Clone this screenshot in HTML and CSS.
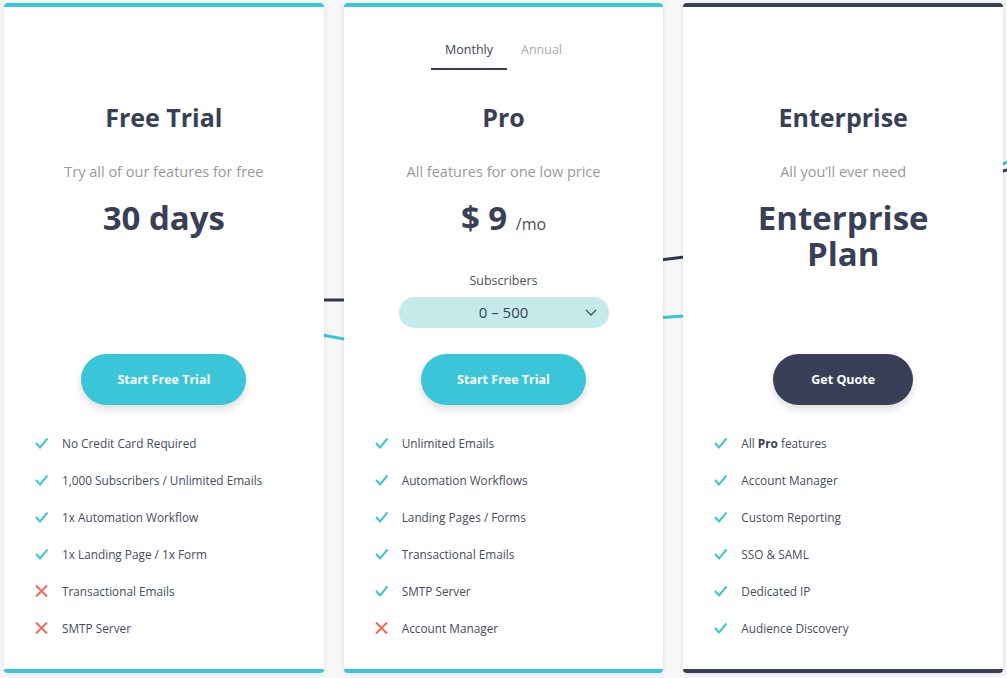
FILE: index.html
```html
<!DOCTYPE html>
<html>
    <head>
        <meta name="viewport" content="width=device-width, initial-scale=1.0">
        <link rel="stylesheet" href="styles.css">
    </head>
    <body>
        <div class="pricing">
            <svg class="lines" width="1007" height="678" viewBox="0 0 1007 678">
                <polyline points="300,300 344,300 684,257 1007,170" fill="none" stroke="#2f3850" stroke-width="3"/>
                <polyline points="300,331 344,339 684,316 1007,162" fill="none" stroke="#3bc5d8" stroke-width="3"/>
            </svg>

            <div class="card">
                <div class="tabs"></div>
                <div class="info">
                    <h2 class="name">Free Trial</h2>
                    <p class="desc">Try all of our features for free</p>
                    <p class="price">30 days</p>
                </div>
                <button class="btn">Start Free Trial</button>
                <ul class="features">
                    <li><span class="ok"></span>No Credit Card Required</li>
                    <li><span class="ok"></span>1,000 Subscribers / Unlimited Emails</li>
                    <li><span class="ok"></span>1x Automation Workflow</li>
                    <li><span class="ok"></span>1x Landing Page / 1x Form</li>
                    <li><span class="no"></span>Transactional Emails</li>
                    <li><span class="no"></span>SMTP Server</li>
                </ul>
            </div>

            <div class="card">
                <div class="tabs">
                    <span class="tab active">Monthly</span>
                    <span class="tab">Annual</span>
                </div>
                <div class="info">
                    <h2 class="name">Pro</h2>
                    <p class="desc">All features for one low price</p>
                    <p class="price">$ 9 <small>/mo</small></p>
                    <p class="label">Subscribers</p>
                    <div class="select">
                        0 – 500
                        <svg class="chev" width="12" height="8" viewBox="0 0 12 8"><polyline points="1,1 6,6 11,1" fill="none" stroke="#4a4f5e" stroke-width="1.3"/></svg>
                    </div>
                </div>
                <button class="btn">Start Free Trial</button>
                <ul class="features">
                    <li><span class="ok"></span>Unlimited Emails</li>
                    <li><span class="ok"></span>Automation Workflows</li>
                    <li><span class="ok"></span>Landing Pages / Forms</li>
                    <li><span class="ok"></span>Transactional Emails</li>
                    <li><span class="ok"></span>SMTP Server</li>
                    <li><span class="no"></span>Account Manager</li>
                </ul>
            </div>

            <div class="card dark">
                <div class="tabs"></div>
                <div class="info">
                    <h2 class="name">Enterprise</h2>
                    <p class="desc">All you’ll ever need</p>
                    <p class="price big">Enterprise<br>Plan</p>
                </div>
                <button class="btn">Get Quote</button>
                <ul class="features">
                    <li><span class="ok"></span>All&nbsp;<b>Pro</b>&nbsp;features</li>
                    <li><span class="ok"></span>Account Manager</li>
                    <li><span class="ok"></span>Custom Reporting</li>
                    <li><span class="ok"></span>SSO &amp; SAML</li>
                    <li><span class="ok"></span>Dedicated IP</li>
                    <li><span class="ok"></span>Audience Discovery</li>
                </ul>
            </div>
        </div>
    </body>
</html>
```

FILE: styles.css
```css
body{
    margin: 0;
    background: #f7f7f7;
    font-family: "Open Sans", "Noto Sans", sans-serif;
    color: #383f56;
}
        .pricing{
            position: relative;
            display: flex;
            gap: 20px;
            padding: 3px 4px 0 4px;
            height: 678px;
            box-sizing: border-box;
            overflow: hidden;
        }
        .lines{
            position: absolute;
            left: 0;
            top: 0;
        }
        .card{
            position: relative;
            flex: 1;
            height: 670px;
            box-sizing: border-box;
            background: #fff;
            border-top: 4px solid #3bc5d8;
            border-bottom: 4px solid #3bc5d8;
            border-radius: 4px;
            box-shadow: 0 1px 6px rgba(0, 0, 0, 0.09);
            display: flex;
            flex-direction: column;
            align-items: center;
        }
        .card.dark{
            border-color: #383f56;
        }

        .tabs{
            display: flex;
            justify-content: center;
            height: 38px;
            margin-top: 25px;
        }
        .tab{
            padding: 8px 14px 8px 14px;
            font-size: 12.5px;
            line-height: 20px;
            color: #aaa;
            border-bottom: 2px solid transparent;
        }
        .tab.active{
            color: #383f56;
            border-bottom-color: #383f56;
        }

        .info{
            height: 284px;
            display: flex;
            flex-direction: column;
            align-items: center;
        }
        .name{
            margin: 31px 0 0 0;
            font-size: 25px;
            line-height: 32px;
            font-weight: 700;
        }
        .desc{
            margin: 28px 0 0 0;
            font-size: 14.5px;
            line-height: 22px;
            color: #999;
        }
        .price{
            margin: 17px 0 0 0;
            font-size: 33px;
            line-height: 36px;
            font-weight: 700;
            text-align: center;
        }
        .price.big{
            line-height: 36px;
        }
        .price small{
            font-size: 16px;
            line-height: 16px;
            font-weight: 400;
            color: #4a4f5e;
        }
        .label{
            margin: 36px 0 0 0;
            font-size: 12.5px;
            line-height: 18px;
            color: #4a4f5e;
        }
        .select{
            position: relative;
            margin-top: 7px;
            width: 210px;
            height: 31px;
            line-height: 31px;
            text-align: center;
            border-radius: 16px;
            background: #c4eaea;
            font-size: 15px;
            color: #383f56;
        }
        .chev{
            position: absolute;
            right: 12px;
            top: 12px;
        }

        .btn{
            height: 51px;
            padding: 0 36px;
            border: none;
            border-radius: 26px;
            background: #3bc5d8;
            color: #fff;
            font-family: inherit;
            font-size: 12.5px;
            font-weight: 700;
            box-shadow: 0 4px 8px rgba(0, 0, 0, 0.14);
            cursor: pointer;
        }
        .dark .btn{
            padding: 0 38px;
            background: #383f56;
        }

        .features{
            list-style: none;
            align-self: stretch;
            margin: 19px 0 0 0;
            padding: 0 0 0 31px;
        }
        .features li{
            display: flex;
            align-items: center;
            height: 37px;
            font-size: 11.8px;
            color: #464c60;
        }
        .features b{
            font-weight: 700;
            color: #383f56;
        }
        .ok, .no{
            width: 13px;
            height: 12px;
            margin-right: 14px;
            background-repeat: no-repeat;
            background-position: center;
        }
        .ok{
            background-image: url("data:image/svg+xml,%3Csvg xmlns='http://www.w3.org/2000/svg' width='13' height='12' viewBox='0 0 13 12'%3E%3Cpolyline points='1,6 5,10.5 12.5,1.5' fill='none' stroke='%233bc5d8' stroke-width='2'/%3E%3C/svg%3E");
        }
        .no{
            background-image: url("data:image/svg+xml,%3Csvg xmlns='http://www.w3.org/2000/svg' width='13' height='12' viewBox='0 0 13 12'%3E%3Cpath d='M1 0.5 L12 11.5 M12 0.5 L1 11.5' fill='none' stroke='%23f2665a' stroke-width='2'/%3E%3C/svg%3E");
        }
```
